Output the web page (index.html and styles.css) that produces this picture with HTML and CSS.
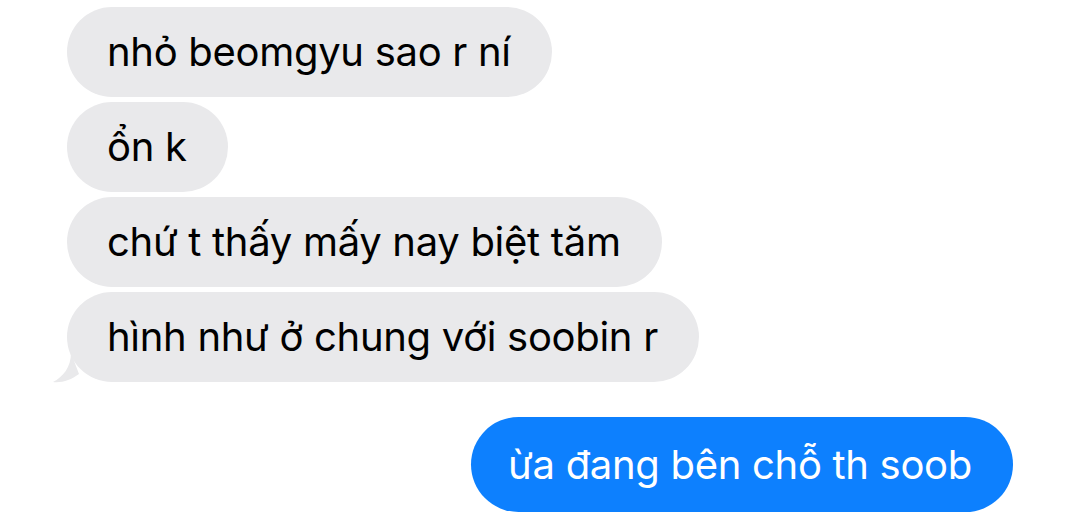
FILE: index.html
```html
<!DOCTYPE html>
<html lang="vi">
<head>
  <meta charset="UTF-8" />
  <meta name="viewport" content="width=device-width, initial-scale=1.0" />
  <title>Tin nhắn</title>
  <link rel="stylesheet" href="styles.css">
</head>
<body>
  <div class="chat">
    <div class="msg in">nhỏ beomgyu sao r ní</div>
    <div class="msg in">ổn k</div>
    <div class="msg in">chứ t thấy mấy nay biệt tăm</div>
    <div class="msg in last">
      hình như ở chung với soobin r
      <svg class="tail" width="26" height="30" viewBox="0 0 26 30">
        <path d="M18 0 C18 14 10 24 0 29 C9 30 18 27 26 21 Z" fill="#e9e9eb" />
      </svg>
    </div>
    <div class="msg out">ừa đang bên chỗ th soob</div>
  </div>
</body>
</html>
```

FILE: styles.css
```css
body {
  margin: 0;
  background: #ffffff;
  font-family: 'Inter', 'Roboto', sans-serif;
}
.chat {
  display: flex;
  flex-direction: column;
  align-items: flex-start;
  gap: 5px;
  padding: 7px 67px 0 67px;
}
.msg {
  position: relative;
  font-size: 40px;
  line-height: 90px;
  height: 90px;
  padding: 0 41px 0 40px;
  border-radius: 45px;
  white-space: nowrap;
  letter-spacing: -0.3px;
}
.in {
  background: #e9e9eb;
  color: #000000;
}
.tail {
  position: absolute;
  left: -14px;
  bottom: -1px;
}
.out {
  align-self: flex-end;
  margin-top: 30px;
  height: 95px;
  line-height: 95px;
  padding: 0 41px 0 37px;
  border-radius: 48px;
  background: #0d80fe;
  color: #ffffff;
}
```
